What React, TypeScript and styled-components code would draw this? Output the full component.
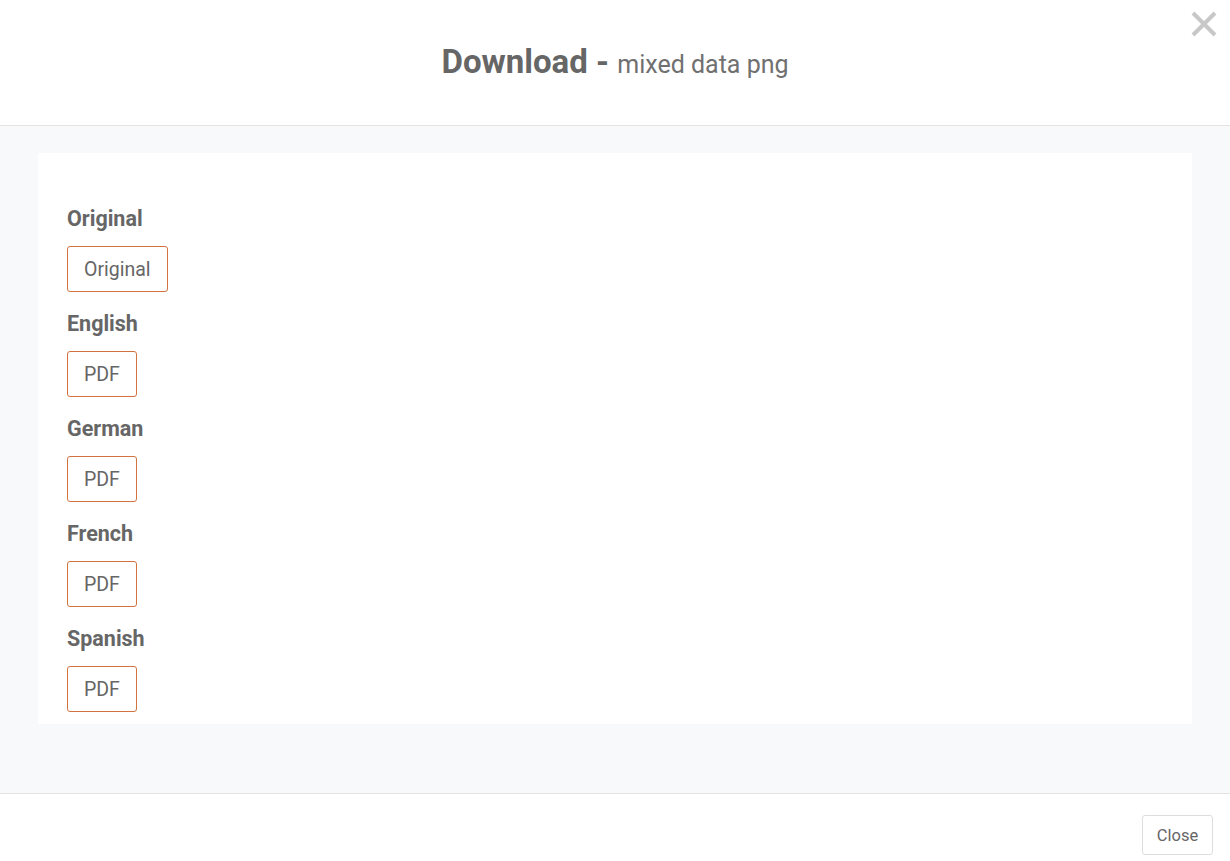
import React from 'react';
import styled, { createGlobalStyle } from 'styled-components';

const GlobalStyle = createGlobalStyle`
  html, body {
    margin: 0;
    padding: 0;
    background: #ffffff;
    font-family: Roboto, "Liberation Sans", Arial, sans-serif;
    color: #666666;
  }
`;

const Modal = styled.div`
  display: flex;
  flex-direction: column;
  height: 861px;
  width: 1230px;
  background: #ffffff;
`;

const Header = styled.div`
  position: relative;
  height: 126px;
  flex-shrink: 0;
  border-bottom: 1px solid #e3e3e3;
  display: flex;
  align-items: center;
  justify-content: center;
  padding-bottom: 3px;
  box-sizing: border-box;
`;

const Title = styled.h2`
  margin: 0;
  font-size: 33px;
  font-weight: 700;
  color: #666666;
  line-height: 1;
`;

const SubTitle = styled.span`
  font-size: 25px;
  font-weight: 400;
  color: #707070;
`;

const CloseIcon = styled.button`
  position: absolute;
  top: 11px;
  right: 13px;
  width: 26px;
  height: 26px;
  padding: 0;
  border: none;
  background: transparent;
  cursor: pointer;
`;

const Body = styled.div`
  flex: 1;
  background: #f8f9fa;
  padding: 27px 38px 69px;
`;

const Card = styled.div`
  background: #ffffff;
  padding: 54px 29px 12px;
  display: flex;
  flex-direction: column;
  gap: 20px;
`;

const Group = styled.div`
  display: flex;
  flex-direction: column;
  align-items: flex-start;
  gap: 15px;
`;

const Label = styled.div`
  font-size: 21.5px;
  font-weight: 700;
  line-height: 24px;
  color: #666666;
`;

const FileButton = styled.button`
  height: 46px;
  padding: 0 16px;
  border: 1px solid #d2733f;
  border-radius: 3px;
  background: #ffffff;
  font-family: inherit;
  font-size: 19.5px;
  color: #666666;
  cursor: pointer;
`;

const Footer = styled.div`
  border-top: 1px solid #e3e3e3;
  height: 68px;
  flex-shrink: 0;
  display: flex;
  align-items: flex-start;
  justify-content: flex-end;
  padding: 21px 17px 0;
  box-sizing: border-box;
`;

const CloseButton = styled.button`
  height: 40px;
  width: 71px;
  border: 1px solid #dddddd;
  border-radius: 3px;
  background: #ffffff;
  font-family: inherit;
  font-size: 16.5px;
  color: #666666;
  cursor: pointer;
`;

const downloads = [
  { language: 'Original', format: 'Original' },
  { language: 'English', format: 'PDF' },
  { language: 'German', format: 'PDF' },
  { language: 'French', format: 'PDF' },
  { language: 'Spanish', format: 'PDF' },
];

const App: React.FC = () => {
  return (
    <>
      <GlobalStyle />
      <Modal>
        <Header>
          <Title>
            Download - <SubTitle>mixed data png</SubTitle>
          </Title>
          <CloseIcon aria-label="Close">
            <svg width="26" height="26" viewBox="0 0 26 26">
              <path d="M2 2 L24 24 M24 2 L2 24" stroke="#c8c8c8" strokeWidth="4" />
            </svg>
          </CloseIcon>
        </Header>
        <Body>
          <Card>
            {downloads.map(d => (
              <Group key={d.language}>
                <Label>{d.language}</Label>
                <FileButton>{d.format}</FileButton>
              </Group>
            ))}
          </Card>
        </Body>
        <Footer>
          <CloseButton>Close</CloseButton>
        </Footer>
      </Modal>
    </>
  );
};

export default App;
